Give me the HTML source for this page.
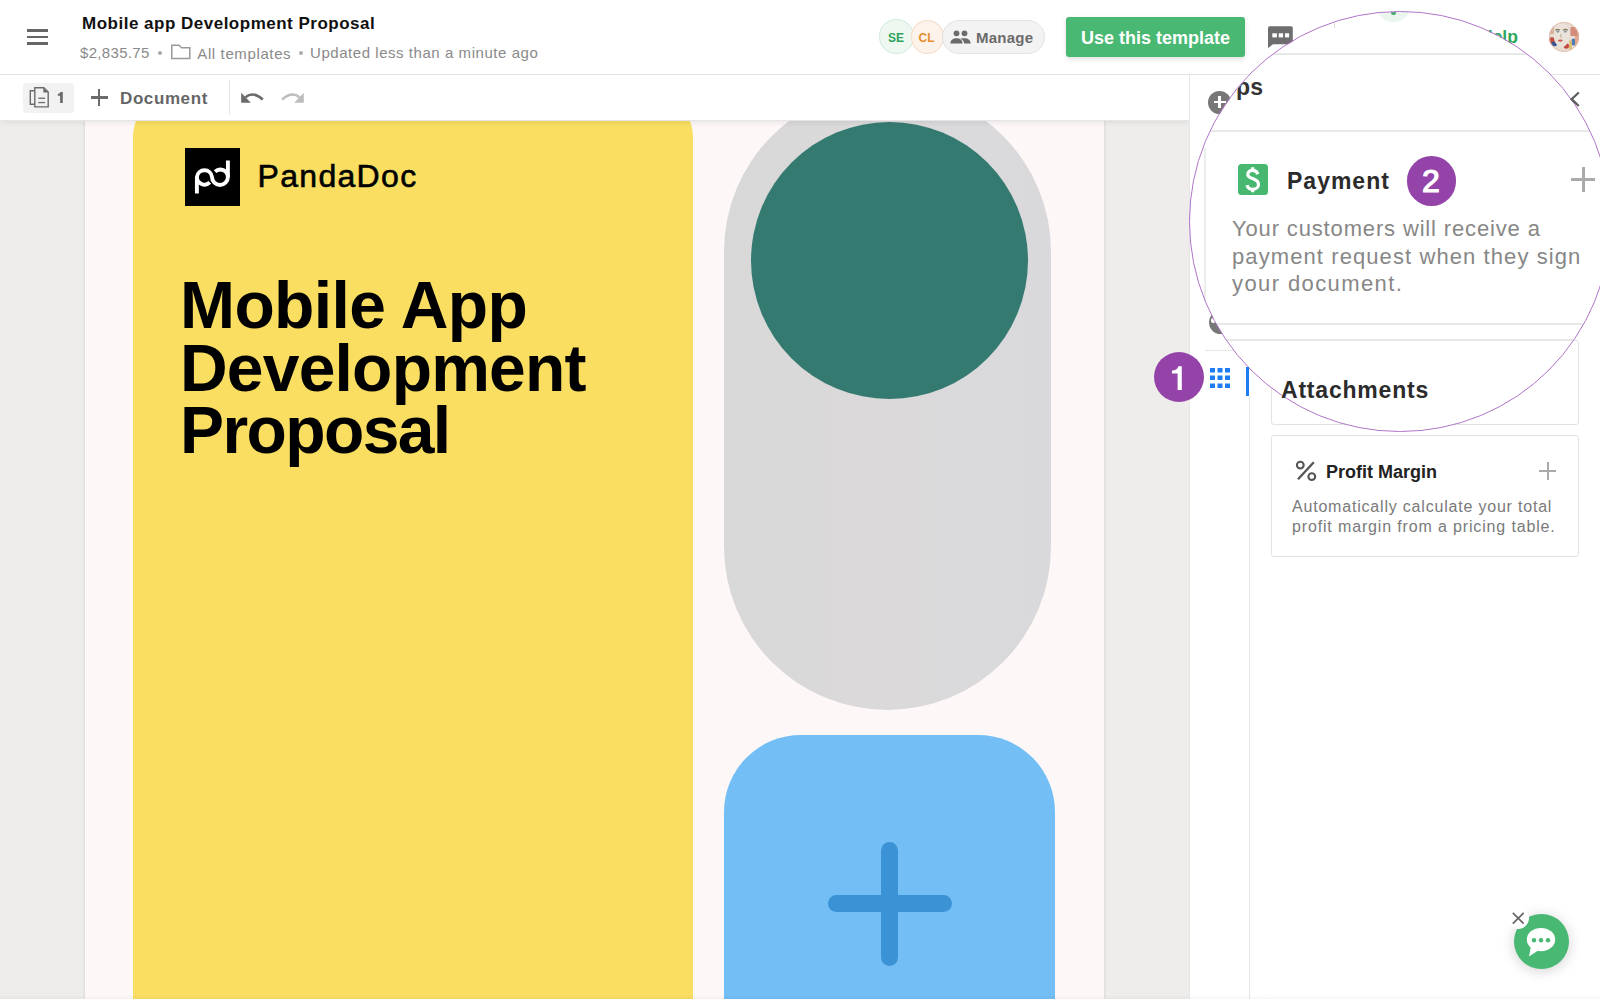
<!DOCTYPE html>
<html><head><meta charset="utf-8">
<style>
*{margin:0;padding:0;box-sizing:border-box}
html,body{width:1600px;height:999px;overflow:hidden;background:#fff;font-family:"Liberation Sans",sans-serif}
.a{position:absolute}
.t{position:absolute;white-space:nowrap;line-height:1}
</style></head><body>
<!-- ===== base: canvas ===== -->
<div class="a" style="left:0;top:120px;width:1190px;height:879px;background:#eeedeb"></div>
<div class="a" style="left:85px;top:80px;width:1019px;height:919px;background:#fdf8f7;box-shadow:0 0 3px rgba(0,0,0,.14)"></div>
<div class="a" style="left:133px;top:88px;width:560px;height:911px;background:#f9de62;border-radius:50px 50px 0 0"></div>
<div class="a" style="left:724px;top:88px;width:327px;height:622px;background:linear-gradient(90deg,#d9d8d8,#dbd9da 50%,#d9d9dc);border-radius:163.5px"></div>
<div class="a" style="left:751px;top:122px;width:277px;height:277px;background:#357a71;border-radius:50%"></div>
<div class="a" style="left:724px;top:735px;width:331px;height:300px;background:#73bef5;border-radius:77px 77px 0 0"></div>
<div class="a" style="left:881px;top:842px;width:17px;height:124px;background:#3b92d5;border-radius:9px"></div>
<div class="a" style="left:828px;top:895px;width:124px;height:17px;background:#3b92d5;border-radius:9px"></div>

<!-- logo -->
<div class="a" style="left:185px;top:148px;width:55.3px;height:58.3px;background:#000"></div>
<svg class="a" style="left:185px;top:148px" width="56" height="59" viewBox="0 0 56 59"><g fill="none" stroke="#fff" stroke-width="3.9"><path d="M11.9 45.6 V29 A7.6 7.6 0 0 1 27 29 A7.6 7.6 0 0 0 42.9 29 V12.4"/><path d="M11.9 29 A7.6 7.6 0 0 0 24.8 34.4"/><path d="M42.9 29 A7.6 7.6 0 0 0 30.1 23.6"/></g></svg>
<div class="t" style="left:257.6px;top:160px;font-size:32px;color:#000;letter-spacing:1.3px;-webkit-text-stroke:.6px #000">PandaDoc</div>
<div class="t" style="left:180px;top:272px;font-size:66px;font-weight:bold;color:#000;letter-spacing:-0.6px">Mobile App</div>
<div class="t" style="left:180px;top:335px;font-size:66px;font-weight:bold;color:#000;letter-spacing:-0.8px">Development</div>
<div class="t" style="left:180px;top:397px;font-size:66px;font-weight:bold;color:#000;letter-spacing:-1.6px">Proposal</div>

<!-- ===== header ===== -->
<div class="a" style="left:0;top:0;width:1600px;height:75px;background:#fff;border-bottom:1px solid #e2e2e2"></div>
<div class="a" style="left:27px;top:29px;width:21px;height:2.6px;background:#666"></div>
<div class="a" style="left:27px;top:35.5px;width:21px;height:2.6px;background:#666"></div>
<div class="a" style="left:27px;top:42px;width:21px;height:2.6px;background:#666"></div>
<div class="t" style="left:82px;top:15px;font-size:17px;font-weight:bold;color:#111;letter-spacing:.5px">Mobile app Development Proposal</div>
<div class="t" style="left:80px;top:45px;font-size:15px;color:#8a8a8a;letter-spacing:.32px">$2,835.75</div>
<div class="a" style="left:157.6px;top:51.4px;width:4px;height:4px;border-radius:50%;background:#aaa"></div>
<svg class="a" style="left:170px;top:43px" width="22" height="18" viewBox="0 0 22 18"><path d="M1.8 2.3 H9 L11.5 4.8 H19.8 V15.4 H1.8 Z" fill="none" stroke="#9a9a9a" stroke-width="1.5"/></svg>
<div class="t" style="left:197.3px;top:45.5px;font-size:15px;color:#8a8a8a;letter-spacing:.62px">All templates</div>
<div class="a" style="left:299px;top:51.4px;width:4px;height:4px;border-radius:50%;background:#aaa"></div>
<div class="t" style="left:310px;top:45px;font-size:15px;color:#8a8a8a;letter-spacing:.55px">Updated less than a minute ago</div>

<div class="a" style="left:879.2px;top:19.2px;width:34.6px;height:34.6px;border-radius:50%;background:#eef8f1;border:1px solid #cfeadb"></div>
<div class="t" style="left:888px;top:32px;font-size:12px;font-weight:bold;color:#2da25b">SE</div>
<div class="a" style="left:911px;top:19.5px;width:33px;height:34px;border-radius:50%;background:#fdf3eb;border:1px solid #f7dcc6"></div>
<div class="t" style="left:918.5px;top:32px;font-size:12px;font-weight:bold;color:#e58f2f">CL</div>
<div class="a" style="left:941.5px;top:19.5px;width:103px;height:34.5px;border-radius:17px;background:#f3f3f3;border:1px solid #e3e3e3"></div>
<svg class="a" style="left:950px;top:30px" width="21" height="14" viewBox="0 0 21 14"><circle cx="6.5" cy="3.3" r="2.9" fill="#6b6b6b"/><circle cx="14.5" cy="3.3" r="2.9" fill="#6b6b6b"/><path d="M0.3 13.5 C0.6 9.5 3.5 8.2 6.5 8.2 C9.5 8.2 12.3 9.5 12.6 13.5 Z" fill="#6b6b6b"/><path d="M10.2 8.7 C11.5 8.3 13 8.2 14.5 8.2 C17.5 8.2 20.4 9.5 20.7 13.5 H14.2 C14 11.2 12.6 9.6 10.2 8.7 Z" fill="#6b6b6b"/></svg>
<div class="t" style="left:976px;top:30px;font-size:15px;font-weight:bold;color:#6b6b6b;letter-spacing:.25px">Manage</div>
<div class="a" style="left:1066px;top:17px;width:179px;height:40px;border-radius:3px;background:#48b872;box-shadow:0 2px 5px rgba(0,0,0,.13)"></div>
<div class="t" style="left:1081px;top:28.8px;font-size:18px;font-weight:bold;color:#fff;letter-spacing:0px">Use this template</div>
<svg class="a" style="left:1268px;top:25.5px" width="25" height="22.5" viewBox="0 0 25 22.5"><path d="M1.8 0.3 H23.2 Q24.8 0.3 24.8 1.9 V16.4 Q24.8 18.2 23.2 18.2 H5 L0 22.2 V1.9 Q0 0.3 1.8 0.3 Z" fill="#6e6e6e"/><rect x="4.3" y="7.3" width="4.6" height="4.1" fill="#fff"/><rect x="10.7" y="7.3" width="4.4" height="4.1" fill="#fff"/><rect x="17" y="7.3" width="4.1" height="4.1" fill="#fff"/></svg>
<div class="t" style="left:1480px;top:29.2px;font-size:17.5px;color:#2ea85a;font-weight:bold">Help</div>
<svg class="a" style="left:1548.7px;top:21.7px" width="30" height="30" viewBox="0 0 30 30">
<defs><clipPath id="av"><circle cx="15" cy="15" r="15"/></clipPath></defs>
<g clip-path="url(#av)"><rect width="30" height="30" fill="#e6dcd2"/>
<rect x="0" y="3" width="5" height="9" fill="#d8b49c"/><circle cx="3" cy="18.5" r="3.3" fill="#bf4a3e"/><ellipse cx="5.2" cy="22" rx="3" ry="2.2" fill="#3a5590"/>
<rect x="21.5" y="5" width="9" height="9" fill="#d48c78"/><ellipse cx="24.5" cy="20" rx="2.2" ry="3.6" fill="#4a7bb8"/><rect x="26" y="14" width="4" height="12" fill="#e0a88c"/><rect x="20" y="18.5" width="2.8" height="9" fill="#dcc070"/><circle cx="17.3" cy="24" r="2.7" fill="#c24a40"/>
<ellipse cx="12.6" cy="13" rx="8" ry="12" fill="#ebe3da"/>
<path d="M6.3 8.2 Q8.6 6.8 11 8.2" stroke="#8a7a62" stroke-width="1.3" fill="none"/><path d="M14 8.2 Q16.4 6.8 18.8 8.2" stroke="#8a7a62" stroke-width="1.3" fill="none"/>
<ellipse cx="8.8" cy="9.8" rx="1.5" ry=".7" fill="#6a8aa8"/><ellipse cx="16.3" cy="9.8" rx="1.5" ry=".7" fill="#6a8aa8"/>
<ellipse cx="11.3" cy="18.6" rx="2.5" ry="1.1" fill="#c85f52"/><path d="M12 12 L11.6 15 L13 15.2" stroke="#b7a68d" stroke-width=".8" fill="none"/>
</g><circle cx="15" cy="15" r="14.6" fill="none" stroke="#e2b9a4" stroke-width=".8"/></svg>

<!-- ===== toolbar ===== -->
<div class="a" style="left:0;top:75px;width:1190px;height:45.5px;background:#fff;border-bottom:1px solid #e4e6ea;box-shadow:0 4px 5px -2px rgba(0,0,0,.07)"></div>
<div class="a" style="left:23px;top:82.5px;width:51px;height:30px;border-radius:4px;background:#f2f2f2"></div>
<svg class="a" style="left:29px;top:86px" width="22" height="23" viewBox="0 0 22 23"><path d="M5.2 4.7 H1.3 V18.3 H5.2" fill="none" stroke="#6b6b6b" stroke-width="1.4"/><path d="M5.8 1.7 H14.8 L19.2 6.1 V20.9 H5.8 Z" fill="none" stroke="#6b6b6b" stroke-width="1.4"/><path d="M14.3 1.7 V6.6 H19.2 Z" fill="#6b6b6b"/><rect x="9.3" y="11.6" width="6.8" height="1.3" fill="#6b6b6b"/><rect x="9.3" y="15.9" width="6.8" height="1.3" fill="#6b6b6b"/></svg>
<svg class="a" style="left:56px;top:91px" width="9" height="13" viewBox="0 0 9 13"><path d="M4.5 1 H6.8 V11.9 H4.1 V4.7 H1.8 V2.9 C3 2.8 4.1 2.2 4.5 1 Z" fill="#6b6b6b"/></svg>
<div class="a" style="left:90.9px;top:96.4px;width:17px;height:2.2px;background:#6b6b6b"></div>
<div class="a" style="left:98.3px;top:89px;width:2.2px;height:17px;background:#6b6b6b"></div>
<div class="t" style="left:120px;top:89.8px;font-size:17px;font-weight:bold;color:#666;letter-spacing:.6px">Document</div>
<div class="a" style="left:229px;top:80px;width:1px;height:35px;background:#e3e3e3"></div>
<svg class="a" style="left:240px;top:88px" width="25" height="18" viewBox="0 0 25 18"><path d="M5.5 9.3 Q13 2.8 22.8 11.5" fill="none" stroke="#6b6b6b" stroke-width="2.6"/><path d="M1.2 4.8 L1.2 14.8 L10.8 14.8 Z" fill="#6b6b6b"/></svg>
<svg class="a" style="left:280px;top:88px" width="25" height="18" viewBox="0 0 25 18"><path d="M19.5 9.3 Q12 2.8 2.2 11.5" fill="none" stroke="#bdbdbd" stroke-width="2.6"/><path d="M23.8 4.8 L23.8 14.8 L14.2 14.8 Z" fill="#bdbdbd"/></svg>

<!-- ===== sidebar ===== -->
<div class="a" style="left:1189px;top:75px;width:411px;height:924px;background:#fff;border-left:1px solid #e6e6e6"></div>
<div class="a" style="left:1208px;top:90.5px;width:23px;height:23px;border-radius:50%;background:#777"></div>
<div class="a" style="left:1213.5px;top:101px;width:12px;height:2.2px;background:#fff"></div>
<div class="a" style="left:1218.4px;top:96px;width:2.2px;height:12px;background:#fff"></div>
<div class="a" style="left:1209px;top:311px;width:23px;height:23px;border-radius:50%;background:#777"></div>
<div class="a" style="left:1211px;top:318px;width:4.5px;height:4.5px;border-radius:50%;background:#fff"></div>
<div class="a" style="left:1205px;top:350px;width:44px;height:1px;background:#e6e6e6"></div>
<svg class="a" style="left:1210px;top:368px" width="21" height="21" viewBox="0 0 21 21" fill="#1d7cf2"><rect x="0" y="0" width="5" height="4.5"/><rect x="7.5" y="0" width="5" height="4.5"/><rect x="15" y="0" width="5" height="4.5"/><rect x="0" y="7.5" width="5" height="4.5"/><rect x="7.5" y="7.5" width="5" height="4.5"/><rect x="15" y="7.5" width="5" height="4.5"/><rect x="0" y="15.5" width="5" height="4.5"/><rect x="7.5" y="15.5" width="5" height="4.5"/><rect x="15" y="15.5" width="5" height="4.5"/></svg>
<div class="a" style="left:1249px;top:396px;width:1px;height:603px;background:#e6e6e6"></div>
<div class="a" style="left:1270.5px;top:339.5px;width:308.5px;height:85px;border:1px solid #e3e3e3;border-radius:3px;background:#fff"></div>
<div class="a" style="left:1270.5px;top:434.5px;width:308.5px;height:122px;border:1px solid #e3e3e3;border-radius:3px;background:#fff"></div>
<svg class="a" style="left:1295px;top:460px" width="23" height="22" viewBox="0 0 23 22"><circle cx="5.3" cy="5.1" r="3.4" fill="none" stroke="#555" stroke-width="2.1"/><circle cx="16.8" cy="16.6" r="3.4" fill="none" stroke="#555" stroke-width="2.1"/><path d="M18.8 2.2 L3 19.2" stroke="#555" stroke-width="2.3"/></svg>
<div class="t" style="left:1326px;top:463px;font-size:18px;font-weight:bold;color:#222;letter-spacing:0px">Profit Margin</div>
<div class="a" style="left:1538.9px;top:470px;width:17.5px;height:2px;background:#aaa"></div>
<div class="a" style="left:1546.7px;top:462px;width:2px;height:17.7px;background:#aaa"></div>
<div class="t" style="left:1292px;top:499px;font-size:16px;color:#7a7a7a;letter-spacing:.8px">Automatically calculate your total</div>
<div class="t" style="left:1292px;top:519px;font-size:16px;color:#7a7a7a;letter-spacing:.85px">profit margin from a pricing table.</div>

<!-- chat widget -->
<div class="a" style="left:1513.8px;top:913.8px;width:55px;height:55px;border-radius:50%;background:#48b872;box-shadow:0 2px 14px rgba(0,0,0,.18)"></div>
<svg class="a" style="left:1525px;top:926px" width="32" height="32" viewBox="0 0 32 32"><ellipse cx="16" cy="13.6" rx="14.2" ry="11.7" fill="#fff"/><path d="M6 20 L4 30.5 L14 24 Z" fill="#fff"/><circle cx="9" cy="14.3" r="2.2" fill="#48b872"/><circle cx="16" cy="14.3" r="2.2" fill="#48b872"/><circle cx="23" cy="14.3" r="2.2" fill="#48b872"/></svg>
<div class="a" style="left:1506.5px;top:906.5px;width:22.5px;height:22.5px;border-radius:50%;background:#fff"></div>
<svg class="a" style="left:1511.5px;top:911.5px" width="12.5" height="12.5" viewBox="0 0 12 12"><path d="M0.8 0.8 L11.2 11.2 M11.2 0.8 L0.8 11.2" stroke="#666" stroke-width="1.6"/></svg>

<!-- ===== magnifier ===== -->
<div class="a" style="left:1190.2px;top:11.5px;width:420px;height:420px;border-radius:50%;overflow:hidden;background:#fff">
 <div class="a" style="left:-1190.2px;top:-11.5px;width:1600px;height:999px">
  <div class="a" style="left:1376px;top:-12px;width:34.5px;height:34px;border-radius:50%;background:#eaf6ee"></div>
  <div class="a" style="left:1390.5px;top:10px;width:5px;height:5px;border-radius:50%;background:#3dab62"></div>
  <div class="a" style="left:1334px;top:22.5px;width:1.2px;height:5.5px;background:#ddd"></div>
  <div class="a" style="left:1190px;top:52.5px;width:420px;height:2.2px;background:#e8e8e8"></div>
  <div class="t" style="left:1236px;top:76px;font-size:23px;font-weight:bold;color:#333;letter-spacing:.3px">ps</div>
  <div class="a" style="left:1190px;top:129.5px;width:420px;height:2.4px;background:#e8e8e8"></div>
  <div class="a" style="left:1203.5px;top:148px;width:450px;height:177px;border-left:2px solid #ececec;border-bottom:2.2px solid #e8e8e8"></div>
  <div class="a" style="left:1237.7px;top:164px;width:30.6px;height:30.8px;border-radius:3.5px;background:#48b871"></div>
  <svg class="a" style="left:1244px;top:166px" width="18" height="28" viewBox="0 0 18 28"><path d="M13.8 8.2 C13 5.6 11.2 4.4 8.7 4.4 C5.7 4.4 3.8 6 3.8 8.4 C3.8 13.6 14.5 11.6 14.5 18.4 C14.5 21.2 12.2 23.3 8.7 23.3 C5.8 23.3 3.7 22 3 19.2" fill="none" stroke="#fff" stroke-width="3.2"/><path d="M8.7 1.3 V4.6 M8.7 23 V26.2" stroke="#fff" stroke-width="3.2"/></svg>
  <div class="t" style="left:1287px;top:169.5px;font-size:23px;font-weight:bold;color:#2b2b2b;letter-spacing:1px">Payment</div>
  <div class="a" style="left:1571.3px;top:177.8px;width:23.7px;height:3.4px;background:#aaa"></div>
  <div class="a" style="left:1581.5px;top:167.4px;width:3.4px;height:24.4px;background:#aaa"></div>
  <div class="t" style="left:1232px;top:218px;font-size:22px;color:#878787;letter-spacing:.85px">Your customers will receive a</div>
  <div class="t" style="left:1232px;top:245.5px;font-size:22px;color:#878787;letter-spacing:1.09px">payment request when they sign</div>
  <div class="t" style="left:1232px;top:273px;font-size:22px;color:#878787;letter-spacing:1.4px">your document.</div>
  <div class="a" style="left:1190px;top:338.5px;width:420px;height:2.2px;background:#e8e8e8"></div>
  <div class="a" style="left:1577px;top:339.5px;width:2px;height:85px;background:#e6e6e6"></div>
 </div>
</div>
<div class="a" style="left:1189.4px;top:10.7px;width:421.6px;height:421.6px;border-radius:50%;border:1.6px solid #b274c9"></div>

<svg class="a" style="left:1568px;top:91px" width="14" height="17" viewBox="0 0 14 17"><path d="M10.8 1.5 L3.6 8.2 L10.8 15" fill="none" stroke="#5e5e5e" stroke-width="2.3"/></svg>
<div class="t" style="left:1281px;top:378.5px;font-size:23px;font-weight:bold;color:#2b2b2b;letter-spacing:.8px">Attachments</div>
<div class="a" style="left:1246px;top:366.5px;width:3px;height:29.5px;background:#1d7cf2"></div>
<div class="a" style="left:1154px;top:352px;width:50px;height:50px;border-radius:50%;background:#9444a8"></div>
<svg class="a" style="left:1170px;top:365px" width="14" height="27" viewBox="0 0 14 27"><path d="M8.4 1.2 H11.8 V25 H7.6 V8.4 H2 V5.4 C5.2 5.3 7.6 4.2 8.4 1.2 Z" fill="#fff"/></svg>
<div class="a" style="left:1406.5px;top:156px;width:49.5px;height:49.5px;border-radius:50%;background:#9444a8"></div>
<div class="t" style="left:1422px;top:165.3px;font-size:32px;color:#fff;-webkit-text-stroke:1.2px #fff">2</div>
<div class="a" style="left:0;top:995px;width:1600px;height:4px;background:linear-gradient(rgba(0,0,0,0),rgba(0,0,0,.035))"></div>
</body></html>
